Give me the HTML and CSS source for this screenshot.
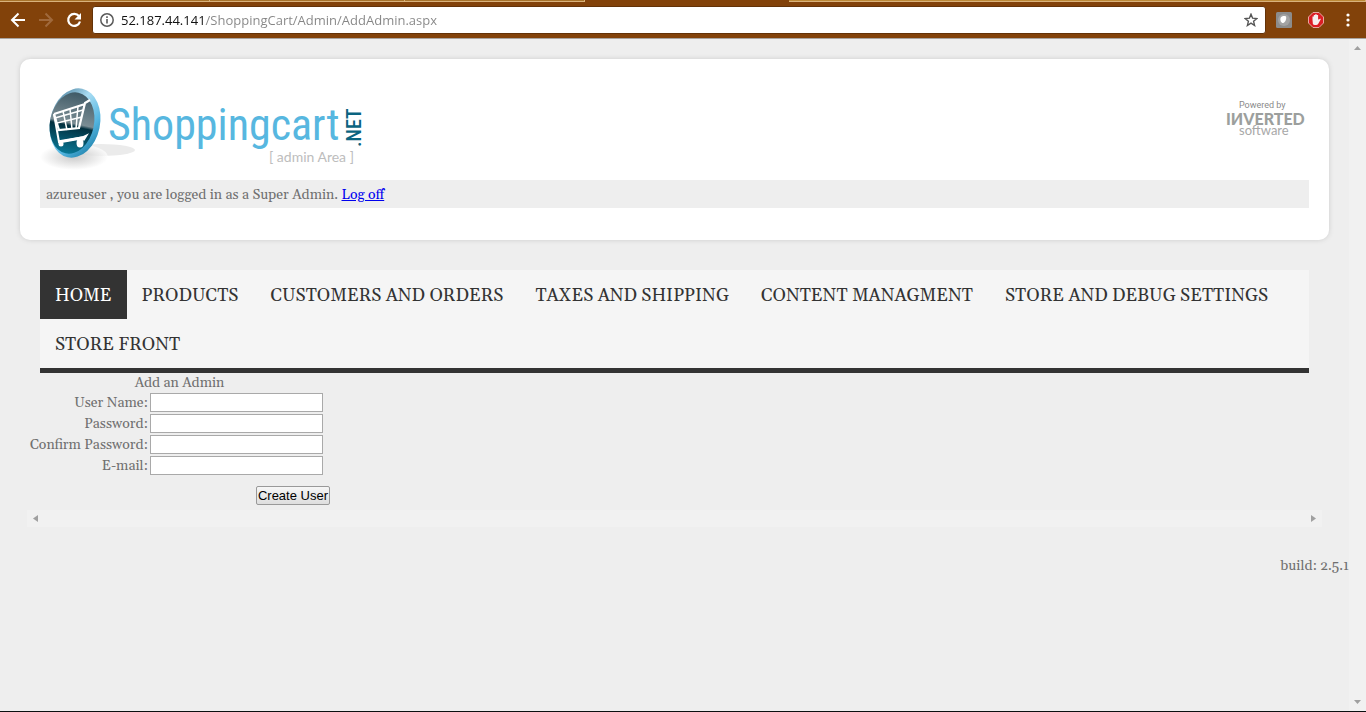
FILE: index.html
```html
<!DOCTYPE html>
<html lang="en">
<head>
    <meta charset="UTF-8">
    <meta name="viewport" content="width=device-width, initial-scale=1.0">
    <title>Add Admin</title>
    <link rel="stylesheet" href="styles.css">
</head>
<body>
    <div class="tabs">
        <span class="tab"></span>
        <span class="tab"></span>
        <span class="tab"></span>
        <span class="tab-active"></span>
        <span class="tab-rest"></span>
    </div>
    <div class="toolbar">
        <button type="button" class="tool" aria-label="Back">
            <svg width="16" height="16" viewBox="0 0 16 16" fill="none" stroke="#fff" stroke-width="2"><path d="M15 8H2.500M8.500 1.500 2 8l6.500 6.500"/></svg>
        </button>
        <button type="button" class="tool" aria-label="Forward">
            <svg width="16" height="16" viewBox="0 0 16 16" fill="none" stroke="#a0693c" stroke-width="2"><path d="M1 8h12.500M7.500 1.500 14 8l-6.500 6.500"/></svg>
        </button>
        <button type="button" class="tool" aria-label="Reload">
            <svg width="16" height="16" viewBox="0 0 16 16"><path d="M13 4.200A6 6 0 1 0 14 9.500" fill="none" stroke="#fff" stroke-width="2.200"/><path d="M15 1v6.500H8.500z" fill="#fff"/></svg>
        </button>
        <div class="address">
            <svg width="14" height="14" viewBox="0 0 14 14"><circle cx="7" cy="7" r="6.200" fill="none" stroke="#5a5a5a" stroke-width="1.500"/><path d="M6.200 6h1.600v4.500H6.200zM6.200 3.300h1.600v1.600H6.200z" fill="#5a5a5a"/></svg>
            <input type="text" class="url" aria-label="Address" value="52.187.44.141/ShoppingCart/Admin/AddAdmin.aspx">
            <button type="button" class="star" aria-label="Bookmark">
                <svg width="14" height="14" viewBox="0 0 14 14" fill="none" stroke="#555" stroke-width="1.400"><path d="M7 1.200l1.600 4 4.300.3-3.300 2.800 1 4.200L7 10.200l-3.600 2.300 1-4.200L1.100 5.500l4.300-.3z"/></svg>
            </button>
        </div>
        <button type="button" class="tool extension" aria-label="Extension">
            <svg width="16" height="16" viewBox="0 0 16 16"><rect width="16" height="16" rx="1.500" fill="#8c8c8c"/><circle cx="8" cy="8" r="6" fill="#a3a3a3"/><path d="M4.500 6c1-2 4-2.500 5.500-1.500.8 2-.5 6-3 6.500C5 11 4 8.500 4.500 6z" fill="#fff"/></svg>
        </button>
        <button type="button" class="tool extension" aria-label="Ad blocker">
            <svg width="16" height="16" viewBox="0 0 16 16"><path d="M5 .500h6L15.500 5v6L11 15.500H5L.500 11V5z" fill="#dc1d24" stroke="#e8a6a0"/><path d="M4.500 8V4.500h1.300V3h1.400v-.8h1.500V3h1.400v4l.6.800 1.500-1.200.6.600-2.700 4.800c-.8 1.300-4.400 1.400-5.200 0z" fill="#f6eeee"/></svg>
        </button>
        <button type="button" class="tool extension" aria-label="Menu">
            <svg width="4" height="14" viewBox="0 0 4 14" fill="#fff"><circle cx="2" cy="2" r="1.600"/><circle cx="2" cy="7" r="1.600"/><circle cx="2" cy="12" r="1.600"/></svg>
        </button>
    </div>

    <div class="viewport">
        <div class="page">
            <header class="header">
                <div class="logos">
                    <svg class="logo" width="330" height="96" viewBox="0 0 330 96" role="img">
                        <defs>
                            <linearGradient id="rim" x1="0" y1="0" x2="1" y2="1">
                                <stop offset="0" stop-color="#3a6e8c"/>
                                <stop offset=".35" stop-color="#a9dcf2"/>
                                <stop offset=".65" stop-color="#56b7e2"/>
                                <stop offset="1" stop-color="#0c6f98"/>
                            </linearGradient>
                            <linearGradient id="disc" x1="0" y1="0" x2="0" y2="1">
                                <stop offset="0" stop-color="#3f5a66"/>
                                <stop offset=".5" stop-color="#7b8d94"/>
                                <stop offset=".55" stop-color="#02303f"/>
                                <stop offset="1" stop-color="#087896"/>
                            </linearGradient>
                            <radialGradient id="shadow">
                                <stop offset="0" stop-color="#b5b5b5"/>
                                <stop offset="1" stop-color="#fff"/>
                            </radialGradient>
                        </defs>
                        <ellipse cx="61" cy="70" rx="34" ry="6" fill="#ebebeb"/>
                        <ellipse cx="34" cy="77" rx="34" ry="13" fill="url(#shadow)" opacity=".7"/>
                        <ellipse cx="35" cy="43" rx="25" ry="35" transform="rotate(12 35 43)" fill="url(#rim)"/>
                        <ellipse cx="32" cy="43" rx="22" ry="31" transform="rotate(12 32 43)" fill="url(#disc)"/>
                        <g fill="none" stroke="#fff" stroke-width="1.500">
                            <path d="M15 38l28-8M17 43l25-6M23 31l4 19M30 29l2 20M38 26l-2 23"/>
                            <path d="M14 34l5 16 20-2 6-25 5-3M14 34l31-10" stroke-width="2.200"/>
                            <path d="M14 34l5 28 25-5" stroke-width="2"/>
                            <path d="M19 61l24-4 4-2-3 5-4-1-17 3z" fill="#fff"/>
                        </g>
                        <circle cx="21" cy="64" r="2.500" fill="#fff"/>
                        <ellipse cx="40" cy="63" rx="3.500" ry="4.500" fill="#fff"/>
                        <text x="68" y="60" class="logo-name">Shoppingcart</text>
                        <text x="-67" y="321" transform="rotate(-90)" class="logo-net">.NET</text>
                        <text x="229" y="82" class="logo-area">[ admin Area ]</text>
                    </svg>
                    <svg class="powered" width="84" height="44" viewBox="0 0 84 44" role="img">
                        <text x="14" y="12" class="powered-by">Powered by</text>
                        <text x="1" y="29" class="powered-name">IИVERTED</text>
                        <text x="14" y="39" class="powered-soft">software</text>
                    </svg>
                </div>
                <div class="login">azureuser , you are logged in as a Super Admin. <a href="#">Log off</a></div>
            </header>

            <nav class="nav">
                <a href="#" class="active">HOME</a>
                <a href="#">PRODUCTS</a>
                <a href="#">CUSTOMERS AND ORDERS</a>
                <a href="#">TAXES AND SHIPPING</a>
                <a href="#">CONTENT MANAGMENT</a>
                <a href="#">STORE AND DEBUG SETTINGS</a>
                <a href="#">STORE FRONT</a>
            </nav>

            <main class="content">
                <form>
                    <table class="form">
                        <tr class="title"><td colspan="2">Add an Admin</td></tr>
                        <tr>
                            <td class="label"><label for="user">User Name:</label></td>
                            <td><input type="text" id="user"></td>
                        </tr>
                        <tr>
                            <td class="label"><label for="pass">Password:</label></td>
                            <td><input type="password" id="pass"></td>
                        </tr>
                        <tr>
                            <td class="label"><label for="confirm">Confirm Password:</label></td>
                            <td><input type="password" id="confirm"></td>
                        </tr>
                        <tr>
                            <td class="label"><label for="email">E-mail:</label></td>
                            <td><input type="text" id="email"></td>
                        </tr>
                        <tr class="message"><td colspan="2"></td></tr>
                        <tr><td colspan="2" class="actions"><button type="button">Create User</button></td></tr>
                    </table>
                </form>
                <div class="hscroll">
                    <svg width="5" height="7" viewBox="0 0 5 7"><path d="M5 0v7L0 3.500z" fill="#a0a0a0"/></svg>
                    <svg width="5" height="7" viewBox="0 0 5 7"><path d="M0 0v7l5-3.500z" fill="#a0a0a0"/></svg>
                </div>
            </main>

            <footer class="footer">build: 2.5.1</footer>
        </div>
        <div class="vscroll">
            <svg width="7" height="4" viewBox="0 0 7 4"><path d="M0 4h7L3.500 0z" fill="#a0a0a0"/></svg>
            <svg width="7" height="4" viewBox="0 0 7 4"><path d="M0 0h7L3.500 4z" fill="#a0a0a0"/></svg>
        </div>
    </div>
</body>
</html>
```

FILE: styles.css
```css
html, body {
    margin: 0;
    padding: 0;
}
body {
    display: flex;
    flex-direction: column;
    box-sizing: border-box;
    height: 100vh;
    border-bottom: 1px solid #0b0f10;
    background-color: #eee;
    font-family: Georgia, Gelasio, "Liberation Serif", serif;
    font-size: 14px;
    line-height: 18px;
    color: #707070;
}

/* browser bar */
.tabs {
    display: flex;
    height: 2px;
    background-color: #82420a;
}
.tab, .tab-rest {
    box-sizing: border-box;
    background-color: #a8742c;
    border-bottom: 1px solid #d9b27c;
    border-right: 1px solid #d9b27c;
}
.tab {
    flex: 0 0 195px;
}
.tab:first-child {
    flex-basis: 210px;
}
.tab:nth-child(3) {
    flex-basis: 180px;
}
.tab-active {
    flex: 0 0 204px;
}
.tab-rest {
    flex: 1;
    background-color: #bd8a38;
}
.toolbar {
    display: flex;
    align-items: center;
    height: 36px;
    padding: 0 2px 0 4px;
    background-color: #82420a;
    border-bottom: 1px solid #a9a4a0;
}
.tool {
    display: flex;
    justify-content: center;
    width: 28px;
    padding: 0;
    border: 0;
    background: none;
}
.extension {
    width: 32px;
}
.address {
    display: flex;
    flex: 1;
    align-items: center;
    box-sizing: border-box;
    height: 28px;
    margin: 0 2px 0 4px;
    padding: 0 7px;
    background-color: #fff;
    border: 1px solid #633208;
    border-radius: 3px;
}
.url {
    flex: 1;
    margin-left: 7px;
    padding: 0;
    border: 0;
    outline: 0;
    font: 13px "Open Sans", sans-serif;
    /* host is black, path is grey */
    color: transparent;
    background: linear-gradient(90deg, #111 84px, #858585 84px);
    -webkit-background-clip: text;
    background-clip: text;
}
.star {
    display: flex;
    padding: 0;
    border: 0;
    background: none;
}

.viewport {
    display: flex;
    flex: 1;
}
.page {
    flex: 1;
}

.header {
    margin: 20px 20px 30px;
    padding: 21px 20px 32px;
    background-color: #fff;
    border-radius: 10px;
    box-shadow: 0 0 5px #ccc;
}
.logos {
    display: flex;
    justify-content: space-between;
    height: 100px;
}
.powered {
    margin-top: 16px;
}
.logo-name {
    font: 44px "Roboto Condensed", Lato, sans-serif;
    fill: #57b7e0;
}
.logo-net {
    font: 500 20px "Roboto Condensed", Lato, sans-serif;
    fill: #0b6480;
}
.logo-area {
    font: 14px Lato, sans-serif;
    fill: #bdbdbd;
}
.powered-by {
    font: 9px Roboto, sans-serif;
    fill: #8a8a8a;
}
.powered-name {
    font: 900 16px Lato, sans-serif;
    fill: #9c9f9d;
}
.powered-soft {
    font: 13px Lato, sans-serif;
    fill: #a8a8a8;
}
.login {
    padding: 6px 6px 4px;
    background-color: #eee;
}
.login a {
    color: #0000ee;
}

.nav {
    display: flex;
    flex-wrap: wrap;
    margin: 0 40px;
    background-color: #f5f5f5;
    border-bottom: 5px solid #333;
}
.nav a {
    margin-right: 2px;
    padding: 2px 15px 0;
    color: #333;
    font-size: 18px;
    line-height: 47px;
    text-decoration: none;
}
.nav .active {
    margin-right: 0;
    color: #fff;
    background-color: #333;
}

.content {
    margin: 0 27px;
}
.form {
    border-spacing: 0 2px;
}
.form td {
    padding: 0;
}
.form tr {
    height: 19px;
}
.form input {
    display: block;
    box-sizing: border-box;
    width: 173px;
    height: 19px;
    margin: 0 9px 0 2px;
    border: 1px solid #a9a9a9;
    background-color: #fff;
}
.form .title {
    height: 16px;
    line-height: 16px;
    text-align: center;
}
.form .label {
    width: 121px;
    text-align: right;
    white-space: nowrap;
}
.form .message {
    height: 7px;
}
.form .actions {
    padding-right: 2px;
    text-align: right;
}
.form button {
    display: block;
    height: 19px;
    margin-left: auto;
    padding: 0 1px;
    border: 1px solid #999;
    border-radius: 2px;
    background: linear-gradient(#f6f6f6, #dedede);
    color: #000;
    font: 13px "Liberation Sans", sans-serif;
}
.hscroll {
    display: flex;
    align-items: center;
    justify-content: space-between;
    height: 17px;
    margin-top: 3px;
    padding: 0 6px;
    background-color: #f1f1f1;
}
.footer {
    margin-top: 30px;
    text-align: right;
}
.vscroll {
    display: flex;
    flex-direction: column;
    align-items: center;
    justify-content: space-between;
    width: 17px;
    padding: 7px 0;
    box-sizing: border-box;
    background-color: #f1f1f1;
}
```
